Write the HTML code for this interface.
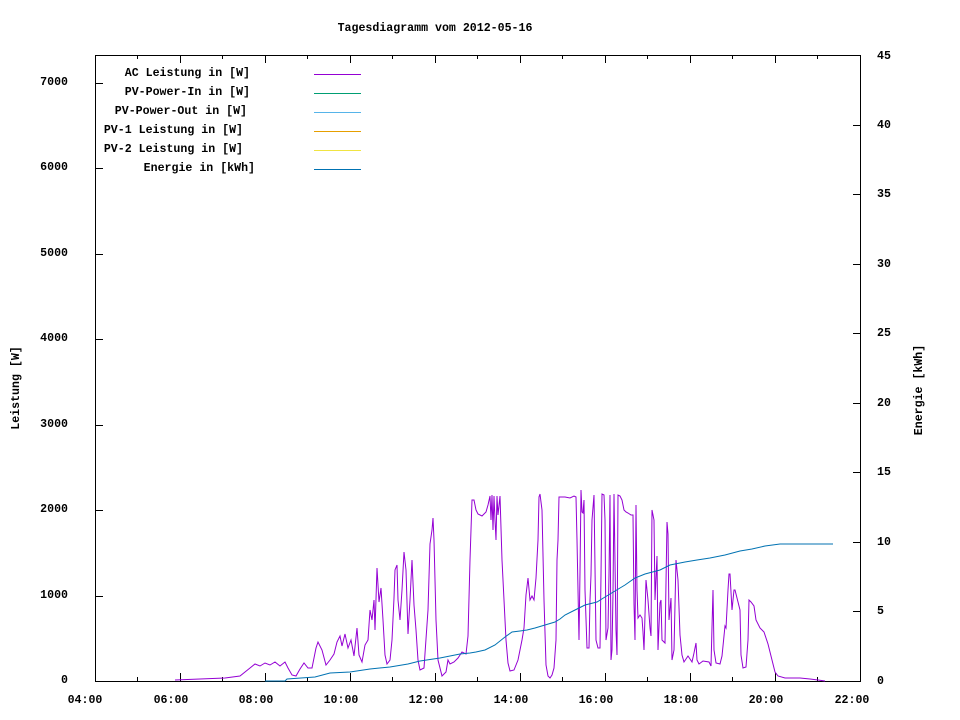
<!DOCTYPE html>
<html><head><meta charset="utf-8"><style>
html,body{margin:0;padding:0;background:#fff;width:960px;height:720px;overflow:hidden}
svg text{font-family:"Liberation Mono","DejaVu Sans Mono",monospace;font-weight:bold;font-size:11.6px;fill:#000}
</style></head><body>
<svg width="960" height="720" xmlns="http://www.w3.org/2000/svg">
<text x="435" y="31" text-anchor="middle">Tagesdiagramm vom 2012-05-16</text>
<rect x="95.5" y="55.5" width="765" height="626" fill="none" stroke="#000" stroke-width="1"/>
<g stroke="#000" stroke-width="1">
<path d="M95 681.5h8M95 596.5h8M95 510.5h8M95 425.5h8M95 339.5h8M95 254.5h8M95 168.5h8M95 83.5h8"/>
<path d="M860 681.5h-7M860 611.5h-7M860 542.5h-7M860 472.5h-7M860 403.5h-7M860 333.5h-7M860 264.5h-7M860 194.5h-7M860 125.5h-7"/>
<path d="M180.5 681v-8M265.5 681v-8M350.5 681v-8M435.5 681v-8M520.5 681v-8M605.5 681v-8M690.5 681v-8M775.5 681v-8"/>
<path d="M180.5 55v8M265.5 55v8M350.5 55v8M435.5 55v8M520.5 55v8M605.5 55v8M690.5 55v8M775.5 55v8"/>
<path d="M137.5 681v-4M222.5 681v-4M307.5 681v-4M392.5 681v-4M477.5 681v-4M562.5 681v-4M647.5 681v-4M732.5 681v-4M817.5 681v-4"/>
<path d="M137.5 55v4M222.5 55v4M307.5 55v4M392.5 55v4M477.5 55v4M562.5 55v4M647.5 55v4M732.5 55v4M817.5 55v4"/>
</g>
<g text-anchor="end">
<text x="68" y="683">0</text><text x="68" y="598">1000</text><text x="68" y="512">2000</text><text x="68" y="427">3000</text><text x="68" y="341">4000</text><text x="68" y="256">5000</text><text x="68" y="170">6000</text><text x="68" y="85">7000</text>
</g>
<g>
<text x="877" y="684">0</text><text x="877" y="614">5</text><text x="877" y="545">10</text><text x="877" y="475">15</text><text x="877" y="406">20</text><text x="877" y="336">25</text><text x="877" y="267">30</text><text x="877" y="197">35</text><text x="877" y="128">40</text><text x="877" y="59">45</text>
</g>
<g text-anchor="middle">
<text x="85" y="703">04:00</text><text x="171" y="703">06:00</text><text x="256" y="703">08:00</text><text x="341" y="703">10:00</text><text x="426" y="703">12:00</text><text x="511" y="703">14:00</text><text x="596" y="703">16:00</text><text x="681" y="703">18:00</text><text x="766" y="703">20:00</text><text x="852" y="703">22:00</text>
</g>
<text transform="translate(19,388) rotate(-90)" text-anchor="middle">Leistung [W]</text>
<text transform="translate(922,390) rotate(-90)" text-anchor="middle">Energie [kWh]</text>
<g text-anchor="end">
<text x="250" y="76">AC Leistung in [W]</text>
<text x="250" y="95">PV-Power-In in [W]</text>
<text x="247" y="114">PV-Power-Out in [W]</text>
<text x="243" y="133">PV-1 Leistung in [W]</text>
<text x="243" y="152">PV-2 Leistung in [W]</text>
<text x="255" y="171">Energie in [kWh]</text>
</g>
<g stroke-width="1">
<path d="M314 74.5h47" stroke="#9400d3"/>
<path d="M314 93.5h47" stroke="#009e73"/>
<path d="M314 112.5h47" stroke="#56b4e9"/>
<path d="M314 131.5h47" stroke="#e69f00"/>
<path d="M314 150.5h47" stroke="#f0e442"/>
<path d="M314 169.5h47" stroke="#0072b2"/>
</g>
<polyline fill="none" stroke="#9400d3" stroke-width="1" points="175,680 200,679 225,678 240,676 250,668 255,664 260,666 265,663 270,665 275,662 280,666 285,662 288,668 292,675 296,676 300,669 304,663 308,668 312,668 316,648 318,642 322,650 326,665 330,660 334,654 337,642 340,636 342,646 345,634 348,648 351,640 354,656 357,628 359,655 362,662 365,645 368,640 370,610 372,620 374,600 375,630 377,568 379,602 381,588 383,620 385,655 387,664 390,660 392,640 394,598 395,570 397,565 398,600 400,620 402,590 404,552 406,570 408,634 410,600 412,560 414,605 416,630 418,660 420,670 424,668 428,610 430,544 432,530 433,518 434,540 436,620 438,660 442,676 446,672 448,660 450,664 454,662 458,658 462,652 466,654 468,636 470,560 472,500 474,500 476,510 478,514 482,516 486,512 488,505 490,496 491,520 492,495 493,530 494,496 495,520 496,540 497,496 498,515 500,496 502,560 504,600 506,640 508,663 510,671 514,670 518,660 522,640 524,628 526,595 528,578 530,600 532,596 534,600 536,578 538,540 539,497 540,494 542,510 544,600 546,665 548,676 550,678 552,675 554,668 556,640 557,560 558,540 559,497 565,497 570,498 574,496 576,497 577,540 578,590 579,640 580,572 581,490 582,512 583,513 584,500 585,590 587,648 589,648 590,600 591,575 592,520 594,495 596,640 598,648 600,648 601,575 602,494 604,495 605,520 606,640 608,628 609,575 610,495 611,660 612,650 613,593 614,494 616,630 617,655 618,495 620,496 622,500 624,510 626,512 628,513 631,515 633,515 634,604 635,640 636,505 637,590 638,618 640,615 642,618 643,632 644,650 646,580 648,600 650,628 651,636 652,510 654,520 655,600 657,556 658,650 660,603 661,600 662,640 665,643 667,522 668,534 669,620 671,598 672,660 674,650 676,560 678,580 680,635 682,655 684,662 688,656 690,659 692,662 694,653 696,643 697,660 699,664 703,661 709,662 711,666 712,627 713,590 714,650 716,663 720,664 722,656 725,626 726,628 728,590 729,574 730,574 732,610 734,590 735,590 738,602 740,610 741,655 743,668 746,667 748,640 749,600 751,602 754,606 756,620 760,628 764,632 768,644 772,660 775,672 778,676 785,678 800,678 810,679 818,680 825,681"/>
<polyline fill="none" stroke="#0072b2" stroke-width="1" points="265,681 285,681 287,679 315,677 330,673 350,672 370,669 390,667 408,664 420,661 440,658 460,654 470,653 476,652 485,650 495,645 505,637 512,632 520,631 527,630 535,628 545,625 555,622 560,619 565,615 575,610 585,605 597,602 605,597 615,591 625,585 635,578 645,574 660,570 670,565 685,562 697,560 710,558 725,555 740,551 752,549 765,546 780,544 833,544"/>
</svg>
</body></html>
